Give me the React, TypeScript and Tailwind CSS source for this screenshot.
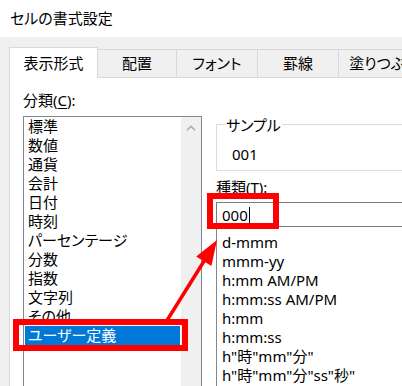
const categories = [
  '標準',
  '数値',
  '通貨',
  '会計',
  '日付',
  '時刻',
  'パーセンテージ',
  '分数',
  '指数',
  '文字列',
  'その他',
  'ユーザー定義',
];

const formats = [
  'd-mmm',
  'mmm-yy',
  'h:mm AM/PM',
  'h:mm:ss AM/PM',
  'h:mm',
  'h:mm:ss',
  'h"時"mm"分"',
  'h"時"mm"分"ss"秒"',
];

const tabs = [
  { label: '配置', width: 'w-[79px]' },
  { label: 'フォント', width: 'w-[81px]' },
  { label: '罫線', width: 'w-[81px]' },
  { label: '塗りつぶし', width: 'w-[90px]' },
];

export default function App() {
  const selected = 'ユーザー定義';

  return (
    <div className="relative w-[402px] h-[386px] overflow-hidden bg-[#f0f0f0] font-['Noto_Sans','Noto_Sans_CJK_JP',sans-serif] [font-feature-settings:'palt'] text-[15px] text-black">
      {/* タイトルバー */}
      <div className="h-[37px] bg-white flex items-center pl-[10px]">セルの書式設定</div>

      <div className="pl-[9px] pt-[10px]">
        {/* タブ */}
        <div className="flex items-end h-[31px]">
          <div className="w-[89px] shrink-0 h-[31px] bg-white border-t border-l border-r border-[#d9d9d9] flex items-center justify-center">
            表示形式
          </div>
          {tabs.map((tab) => (
            <div
              key={tab.label}
              className={`${tab.width} shrink-0 h-[29px] border-t border-r border-b border-[#d9d9d9] flex items-center justify-center whitespace-nowrap`}
            >
              {tab.label}
            </div>
          ))}
        </div>

        {/* タブの中身 */}
        <div className="h-[308px] bg-white border-l border-[#d9d9d9] flex">
          {/* 分類 */}
          <div className="ml-[13px] pt-[12px] shrink-0">
            <div className="leading-[20px] h-[20px]">
              分類(<span className="underline underline-offset-2">C</span>):
            </div>
            <div className="mt-[6px] w-[179px] h-[300px] border border-[#828790] flex">
              <div className="flex-1">
                {categories.map((c) => (
                  <div
                    key={c}
                    className={`mx-[1px] h-[19px] leading-[19px] pl-[3px] whitespace-nowrap ${
                      c === selected ? 'bg-[#0078d7] text-white' : ''
                    }`}
                  >
                    {c}
                  </div>
                ))}
              </div>
              <div className="w-[20px] bg-[#f0f0f0] flex justify-center">
                <svg className="mt-[8px] w-[10px] h-[6px]" viewBox="0 0 10 6" fill="none">
                  <path d="M1 5.2 L5 1.2 L9 5.2" stroke="#a6a6a6" strokeWidth="1.4" />
                </svg>
              </div>
            </div>
          </div>

          {/* サンプル・種類 */}
          <div className="ml-[14px] pt-[46px] w-[200px] shrink-0">
            <div className="relative h-[47px] border border-[#dcdcdc]">
              <span className="absolute left-[8px] top-[-10px] bg-white px-[1px] leading-[20px]">サンプル</span>
              <div className="pt-[19px] pl-[15px] leading-[20px]">001</div>
            </div>
            <div className="mt-[6px] leading-[20px] h-[20px]">
              種類(<span className="underline underline-offset-2">T</span>):
            </div>
            <div className="mt-[5px] h-[25px] border border-[#7a7a7a] flex items-center pl-[5px]">
              <span className="leading-[20px]">000</span>
              <span className="ml-[1px] w-px h-[16px] bg-black" />
            </div>
            <div className="h-[200px] border-l border-[#828790] pt-[6px]">
              {formats.map((f) => (
                <div key={f} className="h-[19px] leading-[19px] pl-[5px] whitespace-nowrap">
                  {f}
                </div>
              ))}
            </div>
          </div>
        </div>
      </div>

      {/* 注釈 */}
      <div className="absolute left-[13px] top-[319px] w-[175px] h-[32px] border-[6px] border-[#ff0000]" />
      <div className="absolute left-[207px] top-[193px] w-[72px] h-[36px] border-[6px] border-[#ff0000]" />
      <svg className="absolute left-0 top-0 w-[402px] h-[386px] pointer-events-none" viewBox="0 0 402 386">
        <line x1="166" y1="322" x2="206" y2="258" stroke="#ff0000" strokeWidth="3.5" />
        <polygon points="217,240 211.4,266 196.2,256.4" fill="#ff0000" />
      </svg>
    </div>
  );
}
